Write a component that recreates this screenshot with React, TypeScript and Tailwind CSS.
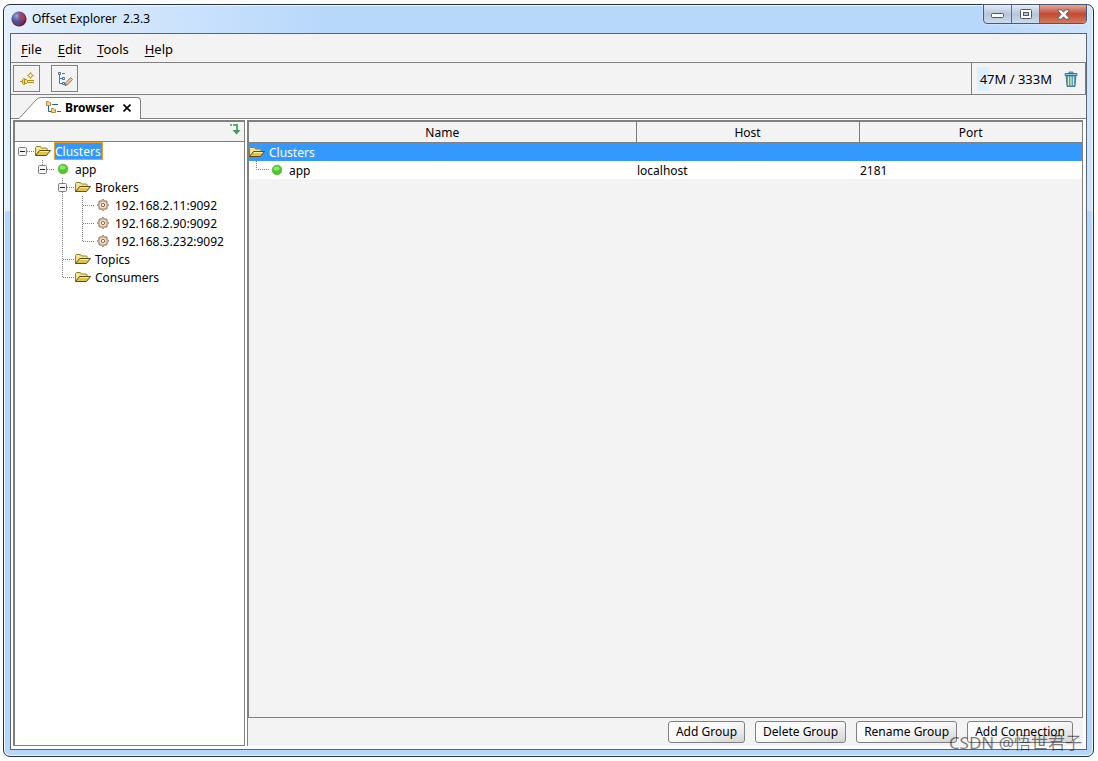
import type { ReactNode } from "react";

const TREE_LINE = "#808080";

interface TreeNode {
  label: string;
  level: number;
  kind: "folder" | "online" | "broker";
  expanded?: boolean;
  selected?: boolean;
}

const tree: TreeNode[] = [
  { label: "Clusters", level: 0, kind: "folder", expanded: true, selected: true },
  { label: "app", level: 1, kind: "online", expanded: true },
  { label: "Brokers", level: 2, kind: "folder", expanded: true },
  { label: "192.168.2.11:9092", level: 3, kind: "broker" },
  { label: "192.168.2.90:9092", level: 3, kind: "broker" },
  { label: "192.168.3.232:9092", level: 3, kind: "broker" },
  { label: "Topics", level: 2, kind: "folder" },
  { label: "Consumers", level: 2, kind: "folder" },
];

const menus = ["File", "Edit", "Tools", "Help"];
const actions = ["Add Group", "Delete Group", "Rename Group", "Add Connection"];

function FolderIcon() {
  return (
    <svg width="16" height="16" viewBox="0 0 16 16" className="shrink-0" aria-hidden="true">
      <path d="M.5 12.5v-8l1-1h4l1 1.500h5l.5.5v2" fill="#f3e692" stroke="#94802a" />
      <path d="M.5 12.500l4-5h11l-4 5z" fill="#e0c24c" stroke="#5f5012" strokeLinejoin="round" />
      <path d="M5 8.500h8.500" stroke="#faedaa" />
    </svg>
  );
}

function OnlineIcon() {
  return (
    <svg width="16" height="16" viewBox="0 0 16 16" className="shrink-0" aria-hidden="true">
      <circle cx="8" cy="8" r="4.8" fill="#4cc628" stroke="#5fb04c" strokeWidth="0.8" />
      <ellipse cx="7.5" cy="6.5" rx="3" ry="2" fill="#8ce968" />
    </svg>
  );
}

function BrokerIcon() {
  return (
    <svg width="16" height="16" viewBox="0 0 16 16" className="shrink-0" fill="none" aria-hidden="true">
      <g fill="#f0d9b5" stroke="#8d6a55" strokeWidth="0.9">
        <circle cx="8" cy="3.900" r="1.300" />
        <circle cx="8" cy="12.100" r="1.300" />
        <circle cx="3.900" cy="8" r="1.300" />
        <circle cx="12.100" cy="8" r="1.300" />
        <circle cx="5.100" cy="5.100" r="1.300" />
        <circle cx="10.900" cy="5.100" r="1.300" />
        <circle cx="5.100" cy="10.900" r="1.300" />
        <circle cx="10.900" cy="10.900" r="1.300" />
      </g>
      <circle cx="8" cy="8" r="3.500" fill="#f3e0c2" />
      <circle cx="8" cy="8" r="1.700" fill="#fff" stroke="#8d6a55" />
    </svg>
  );
}

function NodeIcon({ kind }: { kind: TreeNode["kind"] }) {
  if (kind === "folder") return <FolderIcon />;
  if (kind === "online") return <OnlineIcon />;
  return <BrokerIcon />;
}

function AppLogo() {
  return (
    <svg width="16" height="16" viewBox="0 0 16 16" aria-hidden="true">
      <defs>
        <radialGradient id="logo" cx="0.35" cy="0.3" r="0.8">
          <stop offset="0" stopColor="#9aa6dc" />
          <stop offset="0.4" stopColor="#4f5ba6" />
          <stop offset="0.75" stopColor="#8b2340" />
          <stop offset="1" stopColor="#3a1638" />
        </radialGradient>
      </defs>
      <circle cx="8" cy="8" r="7.6" fill="url(#logo)" />
      <path d="M8 1c4 1 6 4 6 7l-4 1-3-2z" fill="#c23a4a" opacity="0.55" />
      <path d="M2 10c3 0 5 1 7 4-3 1-6-1-7-4z" fill="#3158a4" opacity="0.7" />
    </svg>
  );
}

function PlugIcon() {
  return (
    <svg width="16" height="16" viewBox="0 0 16 16" fill="none" stroke="#b98a12" aria-hidden="true">
      <path d="M1 10.500h2M9 9.500h6M9 11.500h6" />
      <path d="M5.500 7.500h-1l-1 1v4l1 1h1zM5.500 8.500h2l1 1v2l-1 1h-2z" fill="#f7dc84" />
      <path d="M11.500 1.500l1 2 2 1-2 1-1 2-1-2-2-1 2-1z" fill="#fff3b8" />
    </svg>
  );
}

function EditTreeIcon() {
  return (
    <svg width="16" height="16" viewBox="0 0 16 16" fill="none" aria-hidden="true">
      <path d="M2.500 4v8.500h4M2.500 7.500h4M5 2.500h3" stroke="#56799f" />
      <path d="M1.500 1.500h2v2h-2zM5.500 6.500h2v2h-2zM5.500 11.500h2v2h-2z" fill="#dbe9f8" stroke="#4470a4" />
      <path d="M8 14.500l1-3 4.500-5 2 2-4.500 5z" fill="#e7c48e" stroke="#8e6a42" strokeWidth="0.8" />
      <path d="M8 14.500l.5-1.500 1 1z" fill="#333" />
    </svg>
  );
}

function BrowserIcon() {
  return (
    <svg width="16" height="16" viewBox="0 0 16 16" fill="none" aria-hidden="true">
      <path d="M3.500 5v6.500H7M7 4.500h6M12 11.500h4" stroke="#22608f" />
      <path d="M1.500 1.500h2l1 1h1v3h-4z" fill="#f6d58c" stroke="#bf8332" />
      <path d="M6.500 8.500h2l1 1h1v3h-4z" fill="#f6d58c" stroke="#bf8332" />
    </svg>
  );
}

function FollowIcon() {
  return (
    <svg width="13" height="13" viewBox="0 0 13 13" fill="none" aria-hidden="true">
      <path d="M1 2h2M4 2h1" stroke="#6db480" strokeWidth="2" />
      <path d="M5 2h3v8" stroke="#5aa873" strokeWidth="2" />
      <path d="M3.500 7h8L7.500 11.500z" fill="#3a9a58" />
    </svg>
  );
}

function TrashIcon() {
  return (
    <svg width="14" height="16" viewBox="0 0 14 16" aria-hidden="true">
      <path d="M2 4h10l-1 11.500H3z" fill="#4a95b8" stroke="#2a6c93" strokeWidth="0.8" />
      <path d="M4.500 5.500v9M7 5.500v9M9.500 5.500v9" stroke="#dcebb8" strokeWidth="1.300" />
      <path d="M1 2.500h12v2H1zM5 1h4v1.500H5z" fill="#8cc4d8" stroke="#2a6c93" strokeWidth="0.8" />
    </svg>
  );
}

function WindowControls() {
  return (
    <div className="-mt-px flex h-5 overflow-hidden rounded-b border border-[#4b5a70] bg-linear-to-b from-[#e4edf7] via-[#b5c5da] to-[#ccdcef] shadow-[0_0_2px_#fff]">
      <button aria-label="Minimize" className="flex w-7 items-center justify-center border-r border-[#5f6f86] pt-1">
        <svg width="13" height="6" viewBox="0 0 13 6">
          <rect x="0.5" y="0.5" width="12" height="4" rx="1" fill="#fff" stroke="#535666" />
        </svg>
      </button>
      <button aria-label="Maximize" className="flex w-7 items-center justify-center border-r border-[#5f6f86]">
        <svg width="12" height="10" viewBox="0 0 12 10">
          <rect x="0.5" y="0.5" width="11" height="9" rx="1" fill="#fff" stroke="#535666" />
          <rect x="3.5" y="3.5" width="5" height="3" fill="#b8c8dc" stroke="#535666" />
        </svg>
      </button>
      <button
        aria-label="Close"
        className="flex w-[46px] items-center justify-center bg-linear-to-b from-[#e5a79c] via-[#c04a33] to-[#d57a60]"
      >
        <svg width="13" height="11" viewBox="0 0 13 11">
          <path
            d="M1 .8h3.200L6.500 3 8.800.8H12v1L9 5.400l3 3.400v1.400H8.800L6.500 7.800l-2.300 2.400H1V8.800l3-3.400-3-3.600z"
            fill="#fff"
            stroke="#535666"
          />
        </svg>
      </button>
    </div>
  );
}

function ToolButton({ label, children }: { label: string; children: ReactNode }) {
  return (
    <button
      aria-label={label}
      className="flex size-[27px] items-center justify-center border border-[#808080] bg-[#f3f3f3]"
    >
      {children}
    </button>
  );
}

function Toggle() {
  return (
    <svg width="9" height="9" viewBox="0 0 9 9" className="block" aria-hidden="true">
      <rect x="0.5" y="0.5" width="8" height="8" rx="1" fill="#f5f5f5" stroke="#808080" />
      <path d="M2 4.500h5" stroke="#222" />
    </svg>
  );
}

// Dotted guides left of a node, one 20px cell per level
function TreeGuides({ index }: { index: number }) {
  const node = tree[index];
  const cells = [];

  for (let level = 1; level <= node.level; level++) {
    const own = level === node.level;
    const rest = tree.slice(index + 1);
    const end = rest.findIndex((n) => n.level < level);
    const siblings = (end === -1 ? rest : rest.slice(0, end)).some((n) => n.level === level);
    let path = "";
    if (own) path = siblings ? "M7.5 0V18M8 9.5H19" : "M7.5 0V9.5H19";
    else if (siblings) path = "M7.5 0V18";
    cells.push(
      <svg key={level} width="20" height="18" viewBox="0 0 20 18" fill="none" className="shrink-0">
        <path d={path} stroke={TREE_LINE} strokeDasharray="1 1" />
      </svg>
    );
  }
  return <>{cells}</>;
}

function TreeRow({ index }: { index: number }) {
  const node = tree[index];
  return (
    <li className="flex h-[18px] items-center">
      <svg width="20" height="18" viewBox="0 0 20 18" fill="none" className="shrink-0">
        {node.level === 0 && <path d="M8 9.500h12" stroke={TREE_LINE} strokeDasharray="1 1" />}
      </svg>
      <TreeGuides index={index} />
      {node.expanded && (
        <button aria-label={`Collapse ${node.label}`} className="mt-px mr-2 -ml-[17px] shrink-0">
          <Toggle />
        </button>
      )}
      <NodeIcon kind={node.kind} />
      <span
        className={
          node.selected
            ? "ml-[3px] h-[18px] border border-[#f0a020] bg-[#3399ff] pr-px leading-[18px] text-white"
            : "ml-1 h-[18px] leading-5"
        }
      >
        {node.label}
      </span>
    </li>
  );
}

function ClusterTree() {
  return (
    <aside className="flex w-[232px] shrink-0 flex-col border-2 border-r border-b border-[#808080] bg-white">
      <div className="flex h-5 items-center justify-end border-b border-[#808080] bg-[#f3f3f3] pr-0.5 pb-1">
        <button aria-label="Follow selection">
          <FollowIcon />
        </button>
      </div>
      <ul className="flex-1">
        {tree.map((node, i) => (
          <TreeRow key={node.label} index={i} />
        ))}
      </ul>
    </aside>
  );
}

function ClusterTable() {
  return (
    <div className="flex-1 border-2 border-r border-b border-[#808080]">
      <table className="w-full table-fixed border-collapse text-left leading-4">
        <colgroup>
          <col />
          <col className="w-[223px]" />
          <col className="w-[223px]" />
        </colgroup>
        <thead>
          <tr className="h-5 border-b border-[#808080]">
            <th className="border-r border-[#808080] p-0 pt-0.5 text-center font-normal">Name</th>
            <th className="border-r border-[#808080] p-0 pt-0.5 text-center font-normal">Host</th>
            <th className="p-0 pt-0.5 text-center font-normal">Port</th>
          </tr>
        </thead>
        <tbody>
          <tr className="h-[18px] bg-[#3399ff] text-white">
            <td className="p-0" colSpan={3}>
              <div className="flex h-[18px] items-center gap-1">
                <FolderIcon />
                <span className="h-[18px] leading-5">Clusters</span>
              </div>
            </td>
          </tr>
          <tr className="h-[18px] bg-white">
            <td className="p-0">
              <div className="flex h-[18px] items-center">
                <svg width="20" height="18" viewBox="0 0 20 18" fill="none">
                  <path d="M7.500 0V8.500H20" stroke={TREE_LINE} strokeDasharray="1 1" />
                </svg>
                <OnlineIcon />
                <span className="ml-1 h-[18px] leading-5">app</span>
              </div>
            </td>
            <td className="p-0 pl-px">
              <div className="h-[18px] leading-5">localhost</div>
            </td>
            <td className="p-0 pl-px">
              <div className="h-[18px] leading-5">2181</div>
            </td>
          </tr>
        </tbody>
      </table>
    </div>
  );
}

export default function App() {
  return (
    <div className="relative h-screen bg-[#fcfcfc] pt-1 pr-1 pb-1 pl-[3px] font-['Noto_Sans','Noto_Sans_CJK_SC',sans-serif] text-[12px] leading-4 text-black">
      <div className="flex h-full flex-col rounded-[7px] border border-[#26313d] bg-[#b4d6fb] bg-[linear-gradient(to_right,#e3f0fe,#b7d7fb_30%,#b7d7fb_90%,#d0e4fd)] bg-[length:100%_206px] bg-no-repeat px-1.5 pb-1.5 shadow-[inset_0_0_0_1px_#eef7ff]">
        <header className="flex h-7 shrink-0 items-start justify-between">
          <h1 className="flex h-7 items-center gap-[5px] whitespace-pre pl-px font-normal">
            <AppLogo />
            Offset Explorer  2.3.3
          </h1>
          <WindowControls />
        </header>

        <main className="flex min-h-0 flex-1 flex-col border border-[#596675] bg-[#f3f3f3]">
          <nav className="flex h-[29px] items-center gap-4 border-b border-[#808080] px-2.5 pt-px text-[13px]">
            {menus.map((menu) => (
              <button key={menu}>
                <span className="underline underline-offset-2">{menu[0]}</span>
                {menu.slice(1)}
              </button>
            ))}
          </nav>

          <div className="flex h-8 items-stretch justify-between border-b border-[#808080]">
            <div className="flex items-center gap-[11px] pl-0.5">
              <ToolButton label="Add connection">
                <PlugIcon />
              </ToolButton>
              <ToolButton label="Edit tree">
                <EditTreeIcon />
              </ToolButton>
            </div>
            <div className="flex items-center gap-3 border-x border-[#808080] pr-[7px] pl-[5px]">
              <span className="bg-linear-to-r from-[#ddeeff] from-[12px] to-transparent to-[12px] py-1 pl-[3px] text-[13px]">
                47M / 333M
              </span>
              <button aria-label="Run garbage collector">
                <TrashIcon />
              </button>
            </div>
          </div>

          <div className="flex h-6 items-end">
            <div className="h-px w-2 bg-[#808080]" />
            <div className="flex h-[22px]">
              <svg width="24" height="22" viewBox="0 0 24 22" fill="none">
                <path d="M0 22L17 3Q19 .5 22 .5H24V22z" fill="#fff" />
                <path d="M0 21.500L17 3Q19 .5 22 .5H24" stroke="#808080" />
              </svg>
              <div className="flex items-center rounded-tr-sm border-t border-r border-[#808080] bg-white pr-2 pb-0.5 pl-0.5 font-bold">
                <BrowserIcon />
                <span className="mr-2 ml-1">Browser</span>
                <button aria-label="Close tab" className="p-px">
                  <svg width="8" height="8" viewBox="0 0 8 8">
                    <path d="M.5 .5l7 7M7.500 .5l-7 7" stroke="#000" strokeWidth="1.600" />
                  </svg>
                </button>
              </div>
            </div>
            <div className="h-px flex-1 bg-[#808080]" />
          </div>

          <div className="flex min-h-0 flex-1 gap-0.5 bg-white pt-px pr-[3px] pb-[3px] pl-0.5">
            <ClusterTree />
            <section className="flex min-w-0 flex-1 flex-col bg-[#f3f3f3]">
              <ClusterTable />
              <div className="flex h-7 items-center justify-end gap-2.5 border-l border-[#808080] pr-2.5">
                {actions.map((action) => (
                  <button
                    key={action}
                    className="h-[22px] rounded-[3px] border border-[#808080] bg-linear-to-br from-white via-[#f8f8f8] to-[#d4d4d4] px-[7px]"
                  >
                    {action}
                  </button>
                ))}
              </div>
            </section>
          </div>
        </main>
      </div>
      <div className="pointer-events-none absolute right-4 bottom-1.5 text-[17px] leading-6 text-black/50">
        CSDN @悟世君子
      </div>
    </div>
  );
}
